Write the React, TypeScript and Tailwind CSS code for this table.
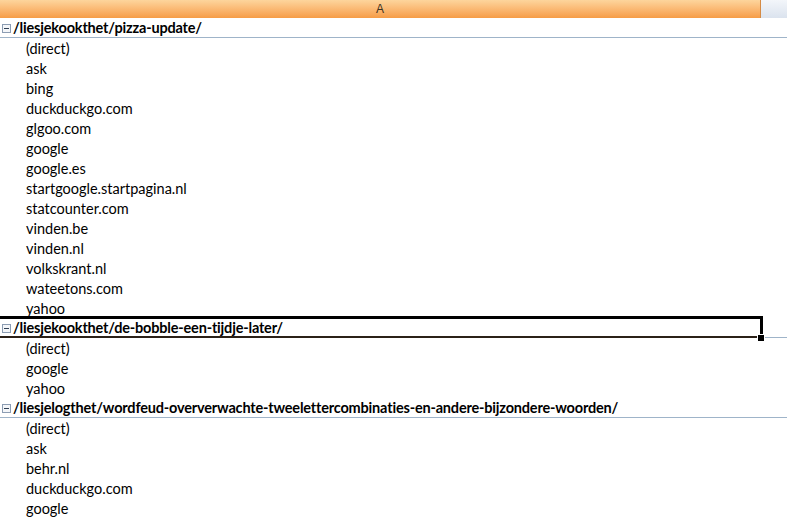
import React from "react";

const groups: { title: string; items: string[] }[] = [
  {
    title: "/liesjekookthet/pizza-update/",
    items: [
      "(direct)",
      "ask",
      "bing",
      "duckduckgo.com",
      "glgoo.com",
      "google",
      "google.es",
      "startgoogle.startpagina.nl",
      "statcounter.com",
      "vinden.be",
      "vinden.nl",
      "volkskrant.nl",
      "wateetons.com",
      "yahoo",
    ],
  },
  {
    title: "/liesjekookthet/de-bobble-een-tijdje-later/",
    items: ["(direct)", "google", "yahoo"],
  },
  {
    title:
      "/liesjelogthet/wordfeud-oververwachte-tweelettercombinaties-en-andere-bijzondere-woorden/",
    items: ["(direct)", "ask", "behr.nl", "duckduckgo.com", "google"],
  },
];

function CollapseIcon() {
  return (
    <svg width="9" height="9" viewBox="0 0 9 9" className="shrink-0">
      <rect x="0.5" y="0.5" width="8" height="8" fill="#f4f6f9" stroke="#8c9db3" />
      <line x1="2" y1="4.5" x2="7" y2="4.5" stroke="#2f3f55" strokeWidth="1" />
    </svg>
  );
}

export default function App() {
  return (
    <div
      className="relative w-[787px] h-[518px] overflow-hidden bg-white text-black"
      style={{ fontFamily: "Lato, 'Open Sans', sans-serif" }}
    >
      <div className="flex h-[18px]">
        <div className="w-[761px] h-full bg-gradient-to-b from-[#fdd59c] to-[#f69c45] border-r border-[#d58b45] flex items-center justify-center">
          <span
            className="text-[12px] text-[#3d3222] leading-none"
            style={{ fontFamily: "'Liberation Sans', sans-serif" }}
          >
            A
          </span>
        </div>
        <div className="flex-1 h-full bg-gradient-to-b from-[#f3f6fa] to-[#dbe3ee]" />
      </div>
      {groups.map((g) => (
        <div key={g.title}>
          <div className="h-[20px] border-b border-[#9fb4c9] flex items-center pl-[2px] pt-[1px] gap-[2px] box-border">
            <CollapseIcon />
            <span className="text-[14.5px] font-bold leading-none whitespace-nowrap tracking-[-0.18px]">
              {g.title}
            </span>
          </div>
          {g.items.map((it, i) => (
            <div key={i} className="h-[20px] flex items-center pl-[26px] pt-[2px]">
              <span className="text-[14.5px] leading-none whitespace-nowrap">{it}</span>
            </div>
          ))}
        </div>
      ))}
      <div className="absolute top-[316px] left-[-3px] w-[766px] h-[22px] border-t-[3px] border-l-[3px] border-r-[3px] border-b-2 border-black border-b-[#2b2118] pointer-events-none" />
      <div className="absolute top-[334px] left-[757px] w-[6px] h-[6px] bg-black border border-white box-content" />
    </div>
  );
}
